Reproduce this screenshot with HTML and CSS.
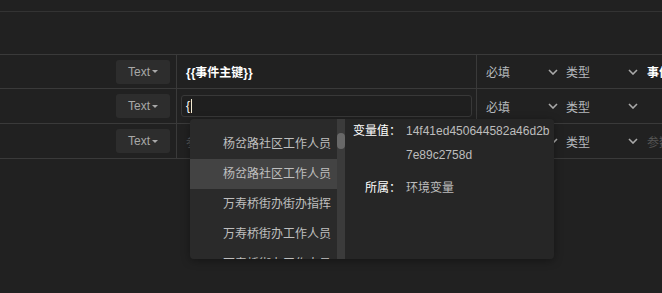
FILE: index.html
```html
<!DOCTYPE html>
<html lang="zh-CN">
<head>
<meta charset="utf-8">
<title>变量</title>
<link rel="stylesheet" href="styles.css">
</head>
<body>
<div class="page">
  <div class="topbar"></div>
  <div class="header"></div>
  <div class="table">
    <div class="row first">
      <div class="c1"><span class="type-btn">Text<i class="caret"></i></span></div>
      <div class="c2"><span class="val">{{事件主键}}</span></div>
      <div class="c3">
        <div class="sel"><span>必填</span><svg class="chev" width="10" height="6" viewBox="0 0 10 6"><path d="M1 1 L5 5 L9 1" fill="none" stroke="#a9a9a9" stroke-width="1.6"/></svg></div>
        <div class="sel"><span>类型</span><svg class="chev" width="10" height="6" viewBox="0 0 10 6"><path d="M1 1 L5 5 L9 1" fill="none" stroke="#a9a9a9" stroke-width="1.6"/></svg></div>
        <div class="desc strong">事件主键</div>
      </div>
    </div>
    <div class="row">
      <div class="c1"><span class="type-btn">Text<i class="caret"></i></span></div>
      <div class="c2 pad-input"><div class="input"><span>{</span><i class="cursor"></i></div></div>
      <div class="c3">
        <div class="sel"><span>必填</span><svg class="chev" width="10" height="6" viewBox="0 0 10 6"><path d="M1 1 L5 5 L9 1" fill="none" stroke="#a9a9a9" stroke-width="1.6"/></svg></div>
        <div class="sel"><span>类型</span><svg class="chev" width="10" height="6" viewBox="0 0 10 6"><path d="M1 1 L5 5 L9 1" fill="none" stroke="#a9a9a9" stroke-width="1.6"/></svg></div>
        <div class="desc"></div>
      </div>
    </div>
    <div class="row">
      <div class="c1"><span class="type-btn">Text<i class="caret"></i></span></div>
      <div class="c2"><span class="placeholder">参数值</span></div>
      <div class="c3">
        <div class="sel"><span>必填</span><svg class="chev" width="10" height="6" viewBox="0 0 10 6"><path d="M1 1 L5 5 L9 1" fill="none" stroke="#a9a9a9" stroke-width="1.6"/></svg></div>
        <div class="sel"><span>类型</span><svg class="chev" width="10" height="6" viewBox="0 0 10 6"><path d="M1 1 L5 5 L9 1" fill="none" stroke="#a9a9a9" stroke-width="1.6"/></svg></div>
        <div class="desc placeholder">参数描述</div>
      </div>
    </div>
  </div>

  <div class="dropdown">
    <div class="list">
      <div class="item">杨岔路社区工作人员</div>
      <div class="item active">杨岔路社区工作人员</div>
      <div class="item">万寿桥街办街办指挥</div>
      <div class="item">万寿桥街办工作人员</div>
      <div class="item">万寿桥街办工作人员</div>
    </div>
    <div class="scroll"><div class="thumb"></div></div>
    <div class="info">
      <div class="label">变量值：</div>
      <div class="value">14f41ed450644582a46d2b7e89c2758d</div>
      <div class="label">所属：</div>
      <div class="value">环境变量</div>
    </div>
  </div>
</div>
</body>
</html>
```

FILE: styles.css
```css
* {
  box-sizing: border-box;
  margin: 0;
  padding: 0;
}

body {
  margin: 0;
  background: #212121;
  font-family: "Liberation Sans", "Noto Sans CJK SC", sans-serif;
  font-size: 12px;
  color: #b8b8b8;
}

.page {
  position: relative;
  width: 662px;
  height: 293px;
  overflow: hidden;
  background: #212121;
}

.topbar {
  height: 12px;
  border-bottom: 1px solid #333333;
}

.header {
  height: 43px;
  border-bottom: 1px solid #3a3a3a;
}

.row {
  display: flex;
  height: 35px;
  border-bottom: 1px solid #3a3a3a;
}

.row.first {
  height: 34px;
}

.c1 {
  width: 177px;
  flex: none;
  border-right: 1px solid #3a3a3a;
  display: flex;
  align-items: center;
  justify-content: flex-end;
  padding-right: 6px;
}

.type-btn {
  display: inline-flex;
  align-items: center;
  height: 24px;
  padding: 0 12px 0 12px;
  background: #2d2d2d;
  border-radius: 3px;
  color: #a8a8a8;
  font-size: 12px;
}

.caret {
  display: inline-block;
  width: 0;
  height: 0;
  margin-left: 2px;
  border-left: 3px solid transparent;
  border-right: 3px solid transparent;
  border-top: 3px solid #a8a8a8;
}

.c2 {
  width: 300px;
  flex: none;
  border-right: 1px solid #3a3a3a;
  display: flex;
  align-items: center;
  padding-left: 9px;
}

.c2.pad-input {
  padding: 0 4px 0 4px;
}

.val {
  color: #ffffff;
  font-weight: bold;
}

.input {
  width: 100%;
  height: 22px;
  border: 1px solid #383838;
  border-radius: 3px;
  background: #1f1f1f;
  padding-left: 4px;
  display: flex;
  align-items: center;
  color: #ffffff;
}

.cursor {
  display: inline-block;
  width: 1px;
  height: 14px;
  background: #f2ead2;
  margin-left: 1px;
}

.placeholder {
  color: #555555;
}

.c3 {
  flex: 1;
  display: flex;
  align-items: center;
  padding-left: 4px;
  overflow: hidden;
  white-space: nowrap;
}

.sel {
  width: 80px;
  flex: none;
  display: flex;
  align-items: center;
  justify-content: space-between;
  padding: 0 3px 0 5px;
  color: #b5b9bd;
}

.chev {
  display: block;
}

.desc {
  padding-left: 6px;
  white-space: nowrap;
}

.desc.strong {
  color: #ffffff;
  font-weight: bold;
}

.dropdown {
  position: absolute;
  left: 190px;
  top: 119px;
  width: 364px;
  height: 140px;
  display: flex;
  border-radius: 4px;
  overflow: hidden;
  box-shadow: 0 2px 8px rgba(0, 0, 0, 0.35);
}

.list {
  width: 147px;
  flex: none;
  background: #2a2a2a;
  padding-top: 10px;
  overflow: hidden;
}

.item {
  height: 30px;
  line-height: 30px;
  padding-left: 33px;
  color: #bfbfbf;
  white-space: nowrap;
}

.item.active {
  background: #434343;
}

.scroll {
  width: 8px;
  flex: none;
  background: #3b3b3b;
  padding-top: 14px;
}

.thumb {
  height: 16px;
  border-radius: 4px;
  background: #686868;
}

.info {
  flex: 1;
  background: #262626;
  padding-left: 8px;
  display: grid;
  grid-template-columns: 48px 146px;
  grid-auto-rows: min-content;
  column-gap: 5px;
  row-gap: 9px;
  align-content: start;
  line-height: 24px;
}

.label {
  color: #ffffff;
  text-align: right;
  white-space: nowrap;
}

.value {
  color: #bdbdbd;
  word-break: break-all;
}
```
